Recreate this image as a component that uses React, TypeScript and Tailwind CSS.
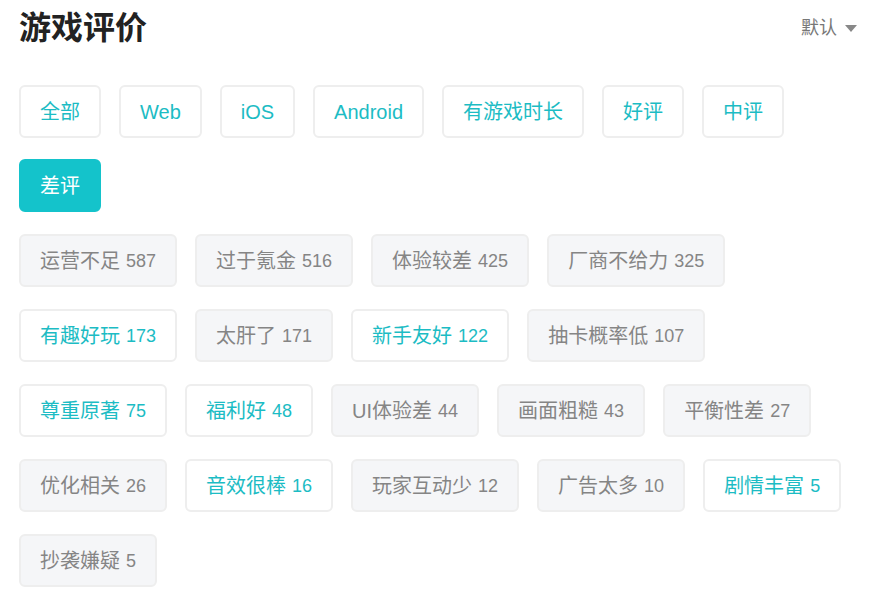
import { useState } from "react";

const filters = ["全部", "Web", "iOS", "Android", "有游戏时长", "好评", "中评", "差评"];

const tags: { label: string; count: number; good?: boolean }[] = [
  { label: "运营不足", count: 587 },
  { label: "过于氪金", count: 516 },
  { label: "体验较差", count: 425 },
  { label: "厂商不给力", count: 325 },
  { label: "有趣好玩", count: 173, good: true },
  { label: "太肝了", count: 171 },
  { label: "新手友好", count: 122, good: true },
  { label: "抽卡概率低", count: 107 },
  { label: "尊重原著", count: 75, good: true },
  { label: "福利好", count: 48, good: true },
  { label: "UI体验差", count: 44 },
  { label: "画面粗糙", count: 43 },
  { label: "平衡性差", count: 27 },
  { label: "优化相关", count: 26 },
  { label: "音效很棒", count: 16, good: true },
  { label: "玩家互动少", count: 12 },
  { label: "广告太多", count: 10 },
  { label: "剧情丰富", count: 5, good: true },
  { label: "抄袭嫌疑", count: 5 },
];

const chipBase =
  "flex h-[53px] items-center rounded-[6px] border-2 px-[19px] text-[20px] leading-none";

export default function App() {
  const [active, setActive] = useState("差评");

  return (
    <div
      className="min-h-screen bg-white px-[19px] pt-[4px]"
      style={{ fontFamily: '"Liberation Sans", "Noto Sans CJK SC", sans-serif' }}
    >
      <div className="flex h-[48px] items-center justify-between">
        <h1 className="text-[32px] font-bold text-[#222]">游戏评价</h1>
        <button className="mr-[10px] flex items-center gap-[8px] text-[18px] text-[#777]">
          默认
          <svg width="12" height="7" viewBox="0 0 12 7" className="mt-[1px]">
            <path d="M0 0h12L6 7z" fill="#888" />
          </svg>
        </button>
      </div>

      <div className="mt-[33px] flex flex-wrap gap-x-[18px] gap-y-[21px]">
        {filters.map((f) =>
          f === active ? (
            <button
              key={f}
              onClick={() => setActive(f)}
              className={`${chipBase} border-[#14c3cb] bg-[#14c3cb] text-white`}
            >
              {f}
            </button>
          ) : (
            <button
              key={f}
              onClick={() => setActive(f)}
              className={`${chipBase} border-[#eeeeee] bg-white text-[#1cbcc4]`}
            >
              {f}
            </button>
          )
        )}
      </div>

      <div className="mt-[22px] flex flex-wrap gap-x-[18px] gap-y-[22px]">
        {tags.map((t) =>
          t.good ? (
            <span key={t.label} className={`${chipBase} border-[#eeeeee] bg-white text-[#1cbcc4]`}>
              {t.label}
              <span className="ml-[6px] text-[18px]">{t.count}</span>
            </span>
          ) : (
            <span key={t.label} className={`${chipBase} border-[#eeeeee] bg-[#f5f6f8] text-[#858585]`}>
              {t.label}
              <span className="ml-[6px] text-[18px]">{t.count}</span>
            </span>
          )
        )}
      </div>
    </div>
  );
}
